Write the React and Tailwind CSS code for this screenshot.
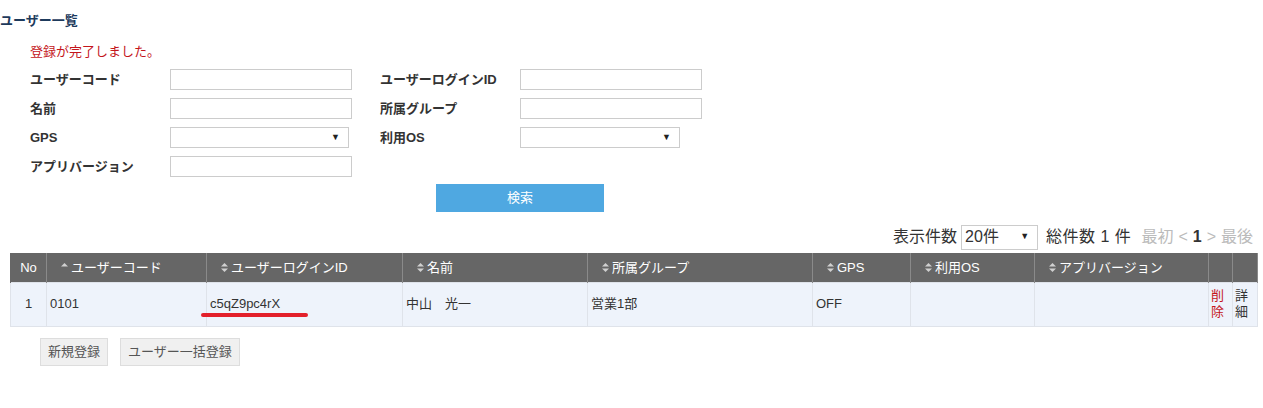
import React from "react";

const font = { fontFamily: '"Liberation Sans", "Noto Sans CJK JP", sans-serif' };

const SortIcon = ({ up }) => (
  <svg width="7" height="9" viewBox="0 0 7 9" className="inline-block mr-[3px] align-[0px]">
    <path d="M3.5 0 L7 3.5 L0 3.5 Z" fill="#d0d0d0" />
    {!up && <path d="M3.5 9 L7 5.5 L0 5.5 Z" fill="#d0d0d0" />}
  </svg>
);

const Field = ({ label, select, selectW = "w-[179px]" }) => (
  <>
    <div className="h-[29px] flex items-center text-[13px] font-bold text-[#333]">{label}</div>
    <div className="h-[29px] flex items-center">
      {select ? (
        <div className={`h-[21px] ${selectW} border border-[#ccc] bg-white flex items-center justify-end pr-[8px] text-[9px] text-[#222]`}>
          ▼
        </div>
      ) : (
        <input className="h-[21px] w-[182px] border border-[#ccc] bg-white outline-none" />
      )}
    </div>
  </>
);

const cols = [
  { w: "w-[36px]", label: "No" },
  { w: "w-[160px]", label: "ユーザーコード", sort: "up" },
  { w: "w-[196px]", label: "ユーザーログインID", sort: "both" },
  { w: "w-[185px]", label: "名前", sort: "both" },
  { w: "w-[225px]", label: "所属グループ", sort: "both" },
  { w: "w-[98px]", label: "GPS", sort: "both" },
  { w: "w-[124px]", label: "利用OS", sort: "both" },
  { w: "w-[174px]", label: "アプリバージョン", sort: "both" },
  { w: "w-[24px]", label: "" },
  { w: "w-[25px]", label: "" },
];

export default function App() {
  return (
    <div className="w-[1263px] h-[408px] bg-white text-[#333]" style={font}>
      <h1 className="pt-[12px] text-[13px] font-bold text-[#1d3a5c] leading-[17px]">ユーザー一覧</h1>

      <div className="pl-[30px] pt-[14px]">
        <p className="text-[13px] text-[#c4161c] leading-[18px]">登録が完了しました。</p>
        <div className="grid grid-cols-[140px_210px_140px_182px] mt-[4px]">
          <Field label="ユーザーコード" />
          <Field label="ユーザーログインID" />
          <Field label="名前" />
          <Field label="所属グループ" />
          <Field label="GPS" select />
          <Field label="利用OS" select selectW="w-[160px]" />
          <Field label="アプリバージョン" />
        </div>
        <button className="ml-[406px] mt-[3px] h-[28px] w-[168px] bg-[#4fa8e1] text-white text-[13px]">検索</button>
      </div>

      <div className="flex items-center justify-end pr-[10px] mt-[13px] h-[24px] text-[16px] text-[#333]">
        <span>表示件数</span>
        <div className="ml-[4px] h-[25px] w-[77px] border border-[#ccc] flex items-center justify-between pl-[3px] pr-[8px]">
          <span>20件</span>
          <span className="text-[9px] text-[#222]">▼</span>
        </div>
        <span className="ml-[8px] tracking-[0.5px]">総件数 1 件</span>
        <span className="ml-[10px] text-[#bbb]">最初</span>
        <span className="ml-[5px] text-[#bbb]">&lt;</span>
        <span className="ml-[5px] font-bold text-[#333]">1</span>
        <span className="ml-[5px] text-[#bbb]">&gt;</span>
        <span className="ml-[5px] text-[#bbb]">最後</span>
      </div>

      <div className="px-[10px] mt-[4px]">
        <table className="table-fixed border-collapse w-[1247px] text-[13px]">
          <colgroup>
            {cols.map((c, i) => (
              <col key={i} className={c.w} />
            ))}
          </colgroup>
          <thead>
            <tr className="bg-[#666] text-white h-[29px]">
              {cols.map((c, i) => (
                <th
                  key={i}
                  className={`border-x border-[#8a8a8a] first:border-l-[#666] font-normal ${i === 0 ? "text-center font-bold" : "text-left pl-[14px]"}`}
                >
                  {c.sort && <SortIcon up={c.sort === "up"} />}
                  {c.label}
                </th>
              ))}
            </tr>
          </thead>
          <tbody>
            <tr className="bg-[#eef3fb] h-[44px] text-[#333]">
              <td className="border border-[#dfe3ea] text-center">1</td>
              <td className="border border-[#dfe3ea] pl-[3px]">0101</td>
              <td className="border border-[#dfe3ea] pl-[3px] relative">
                c5qZ9pc4rX
                <span className="absolute left-[-6px] top-[30px] w-[107px] h-[4px] rounded-full bg-[#e3202b]" />
              </td>
              <td className="border border-[#dfe3ea] pl-[3px]">中山　光一</td>
              <td className="border border-[#dfe3ea] pl-[3px]">営業1部</td>
              <td className="border border-[#dfe3ea] pl-[3px]">OFF</td>
              <td className="border border-[#dfe3ea]"></td>
              <td className="border border-[#dfe3ea]"></td>
              <td className="border border-[#dfe3ea] text-[#c4161c] leading-[16px] pl-[2px]">削<br />除</td>
              <td className="border border-[#dfe3ea] leading-[16px] pl-[2px]">詳<br />細</td>
            </tr>
          </tbody>
        </table>
      </div>

      <div className="flex gap-[12px] pl-[40px] mt-[11px]">
        <button className="h-[28px] px-[7px] bg-[#f0f0f0] border border-[#ddd] text-[13px] text-[#555]">新規登録</button>
        <button className="h-[28px] px-[7px] bg-[#f0f0f0] border border-[#ddd] text-[13px] text-[#555]">ユーザー一括登録</button>
      </div>
    </div>
  );
}
